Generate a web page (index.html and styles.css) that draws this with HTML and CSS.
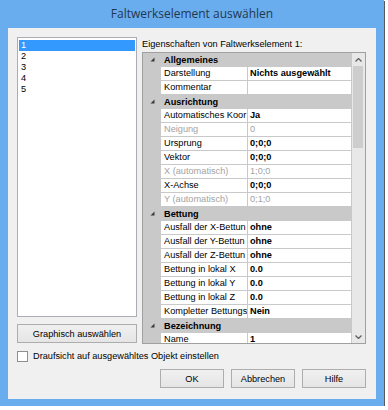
FILE: index.html
```html
<!DOCTYPE html>
<html lang="de">
<head>
<meta charset="UTF-8">
<meta name="viewport" content="width=device-width, initial-scale=1.0">
<title>Faltwerkselement auswählen</title>
<link rel="stylesheet" href="styles.css">
</head>
<body>

<div class="window">
    <div class="titlebar">Faltwerkselement auswählen</div>

    <div class="client">
        <div class="main">
            <div class="left">
                <ul class="listbox">
                    <li class="sel">1</li>
                    <li>2</li>
                    <li>3</li>
                    <li>4</li>
                    <li>5</li>
                </ul>
                <button class="btn wide">Graphisch auswählen</button>
            </div>

            <div class="right">
                <div class="caption">Eigenschaften von Faltwerkselement 1:</div>
                <div class="grid">
                    <div class="rows">
                        <div class="cat"><span class="tri"><svg width="5" height="5" viewBox="0 0 5 5"><polygon points="4.5,0.5 4.5,4.5 0.5,4.5" fill="#3a3a3a"/></svg></span>Allgemeines</div>
                        <div class="prop"><span class="name">Darstellung</span><span class="val b">Nichts ausgewählt</span></div>
                        <div class="prop"><span class="name">Kommentar</span><span class="val"></span></div>

                        <div class="cat"><span class="tri"><svg width="5" height="5" viewBox="0 0 5 5"><polygon points="4.5,0.5 4.5,4.5 0.5,4.5" fill="#3a3a3a"/></svg></span>Ausrichtung</div>
                        <div class="prop"><span class="name">Automatisches Koor</span><span class="val b">Ja</span></div>
                        <div class="prop off"><span class="name">Neigung</span><span class="val">0</span></div>
                        <div class="prop"><span class="name">Ursprung</span><span class="val b">0;0;0</span></div>
                        <div class="prop"><span class="name">Vektor</span><span class="val b">0;0;0</span></div>
                        <div class="prop off"><span class="name">X (automatisch)</span><span class="val">1;0;0</span></div>
                        <div class="prop"><span class="name">X-Achse</span><span class="val b">0;0;0</span></div>
                        <div class="prop off"><span class="name">Y (automatisch)</span><span class="val">0;1;0</span></div>

                        <div class="cat"><span class="tri"><svg width="5" height="5" viewBox="0 0 5 5"><polygon points="4.5,0.5 4.5,4.5 0.5,4.5" fill="#3a3a3a"/></svg></span>Bettung</div>
                        <div class="prop"><span class="name">Ausfall der X-Bettun</span><span class="val b">ohne</span></div>
                        <div class="prop"><span class="name">Ausfall der Y-Bettun</span><span class="val b">ohne</span></div>
                        <div class="prop"><span class="name">Ausfall der Z-Bettun</span><span class="val b">ohne</span></div>
                        <div class="prop"><span class="name">Bettung in lokal X</span><span class="val b">0.0</span></div>
                        <div class="prop"><span class="name">Bettung in lokal Y</span><span class="val b">0.0</span></div>
                        <div class="prop"><span class="name">Bettung in lokal Z</span><span class="val b">0.0</span></div>
                        <div class="prop"><span class="name">Kompletter Bettungs</span><span class="val b">Nein</span></div>

                        <div class="cat"><span class="tri"><svg width="5" height="5" viewBox="0 0 5 5"><polygon points="4.5,0.5 4.5,4.5 0.5,4.5" fill="#3a3a3a"/></svg></span>Bezeichnung</div>
                        <div class="prop"><span class="name">Name</span><span class="val b">1</span></div>
                    </div>

                    <div class="vscroll">
                        <div class="arrow"><svg width="7" height="4" viewBox="0 0 7 4"><polyline points="0.5,3.5 3.5,0.5 6.5,3.5" fill="none" stroke="#606060" stroke-width="1.3"/></svg></div>
                        <div class="track"><div class="thumb"></div></div>
                        <div class="arrow"><svg width="7" height="4" viewBox="0 0 7 4"><polyline points="0.5,0.5 3.5,3.5 6.5,0.5" fill="none" stroke="#606060" stroke-width="1.3"/></svg></div>
                    </div>
                </div>
            </div>
        </div>

        <label class="check"><span class="box"></span>Draufsicht auf ausgewähltes Objekt einstellen</label>

        <div class="buttons">
            <button class="btn">OK</button>
            <button class="btn">Abbrechen</button>
            <button class="btn">Hilfe</button>
        </div>
    </div>
</div>

</body>
</html>
```

FILE: styles.css
```css
body {
    margin: 0;
    background: #ffffff;
    font-family: "Liberation Sans", Arial, sans-serif;
    font-size: 9.2px;
    color: #000;
}
.window {
    width: 384px;
    height: 406px;
    background: #6aadee;
    box-shadow: 1px 1px 0 #5a5a5a;
    display: flex;
    flex-direction: column;
}
.titlebar {
    height: 28px;
    line-height: 27px;
    text-align: center;
    font-family: "Open Sans", "Noto Sans", sans-serif;
    font-size: 12px;
    color: #22384f;
}
.client {
    margin: 0 8px;
    height: 371px;
    box-sizing: border-box;
    background: #f0f0f0;
    padding: 9px 10px 0 9px;
}
.main {
    display: flex;
    gap: 5px;
    height: 307px;
}
.left {
    width: 120px;
    display: flex;
    flex-direction: column;
}
.listbox {
    list-style: none;
    margin: 0;
    padding: 2px 1px 0 1px;
    height: 280px;
    box-sizing: border-box;
    border: 1px solid #aaadb3;
    background: #fff;
}
.listbox li {
    height: 11px;
    line-height: 11px;
    padding-left: 2px;
}
.listbox li.sel {
    background: #3399ff;
    color: #fff;
}
.btn {
    font-family: inherit;
    font-size: 9.2px;
    color: #000;
    height: 19px;
    width: 64px;
    padding: 0;
    border: 1px solid #adadad;
    background: linear-gradient(#f0f0f0, #e5e5e5);
    border-radius: 0;
}
.btn.wide {
    width: 120px;
    margin-top: 7px;
}
.right {
    width: 224px;
    display: flex;
    flex-direction: column;
}
.caption {
    height: 15px;
    line-height: 14px;
}
.grid {
    height: 292px;
    box-sizing: border-box;
    border: 1px solid #a0a0a0;
    display: flex;
    background: #fff;
}
.rows {
    width: 209px;
    background: #c9c9c9;
    overflow: hidden;
}
.cat {
    display: flex;
    align-items: center;
    height: 13px;
    margin-bottom: 1px;
    font-weight: bold;
    white-space: nowrap;
}
.tri {
    width: 18px;
    height: 13px;
    margin-right: 3px;
    display: flex;
    align-items: center;
    justify-content: center;
    padding-left: 1px;
    box-sizing: border-box;
}
.prop {
    display: flex;
    height: 13px;
    line-height: 13px;
    margin: 0 1px 1px 18px;
}
.prop .name {
    width: 83px;
    padding-left: 3px;
    margin-right: 1px;
    background: #fff;
    white-space: nowrap;
    overflow: hidden;
}
.prop .val {
    flex: 1;
    padding-left: 2px;
    background: #fff;
    white-space: nowrap;
    overflow: hidden;
}
.prop .val.b {
    font-weight: bold;
}
.prop.off {
    color: #a3a3a3;
}
.vscroll {
    width: 13px;
    background: #e8e8e8;
    display: flex;
    flex-direction: column;
}
.vscroll .arrow {
    height: 13px;
    display: flex;
    align-items: center;
    justify-content: center;
}
.vscroll .track {
    flex: 1;
}
.vscroll .thumb {
    margin: 0 2px 0 1px;
    height: 82px;
    background: #cdcdcd;
}
.check {
    display: flex;
    align-items: center;
    gap: 5px;
    height: 12px;
    margin-top: 6px;
}
.check .box {
    width: 11px;
    height: 11px;
    border: 1px solid #8f8f8f;
    background: #fff;
    box-sizing: border-box;
}
.buttons {
    display: flex;
    justify-content: flex-end;
    gap: 7px;
    margin-top: 7px;
}
```
